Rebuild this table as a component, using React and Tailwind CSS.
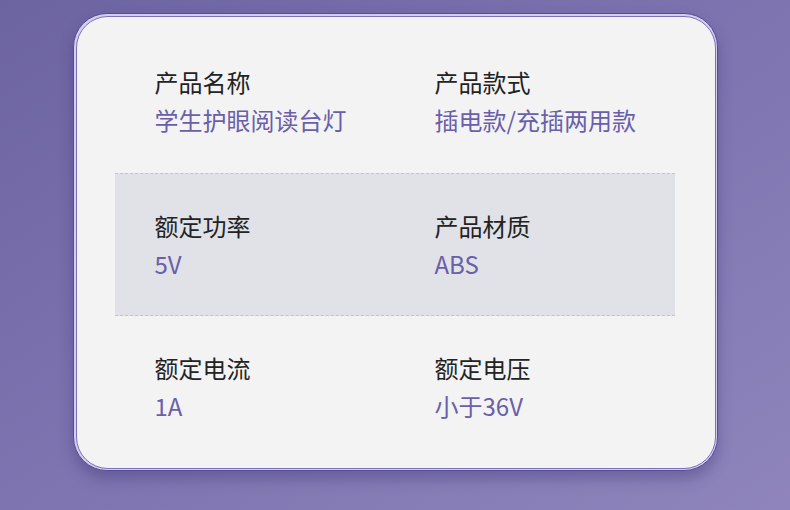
import React from 'react';

const rows = [
  [
    { label: '产品名称', value: '学生护眼阅读台灯' },
    { label: '产品款式', value: '插电款/充插两用款' },
  ],
  [
    { label: '额定功率', value: '5V' },
    { label: '产品材质', value: 'ABS' },
  ],
  [
    { label: '额定电流', value: '1A' },
    { label: '额定电压', value: '小于36V' },
  ],
];

const Cell = ({ label, value }) => (
  <div className="pl-[40px] pt-[33px]">
    <p className="text-[24px] leading-[38px] text-[#232323]">{label}</p>
    <p className="text-[24px] leading-[38px] text-[#6a5fa9]">{value}</p>
  </div>
);

export default function App() {
  return (
    <div
      className="w-[790px] h-[510px] overflow-hidden bg-linear-to-br from-[#6c63a1] via-[#7d74b0] to-[#8f85bc] pt-[13px] pl-[73px]"
      style={{ fontFamily: '"Noto Sans CJK SC", "Noto Sans", sans-serif' }}
    >
      {/* Card with double outline */}
      <div className="w-[645px] h-[458px] rounded-[34px] border-[1.5px] border-[#574d94] bg-[#d3cef0] p-[1.5px] shadow-[0_8px_14px_rgba(55,45,110,0.35)]">
        <div className="h-full rounded-[32px] border-[1.5px] border-[#7a71ba] bg-[#f3f3f4] pt-[13px] pl-[38px]">
          <div className="w-[560px]">
            {rows.map((row, i) => (
              <div
                key={i}
                className={`grid grid-cols-2 h-[143px] ${
                  i === 1 ? 'bg-[#e0e2e7] border-y border-dashed border-[#c4c4c8]' : ''
                }`}
              >
                {row.map((c) => (
                  <Cell key={c.label} {...c} />
                ))}
              </div>
            ))}
          </div>
        </div>
      </div>
    </div>
  );
}
